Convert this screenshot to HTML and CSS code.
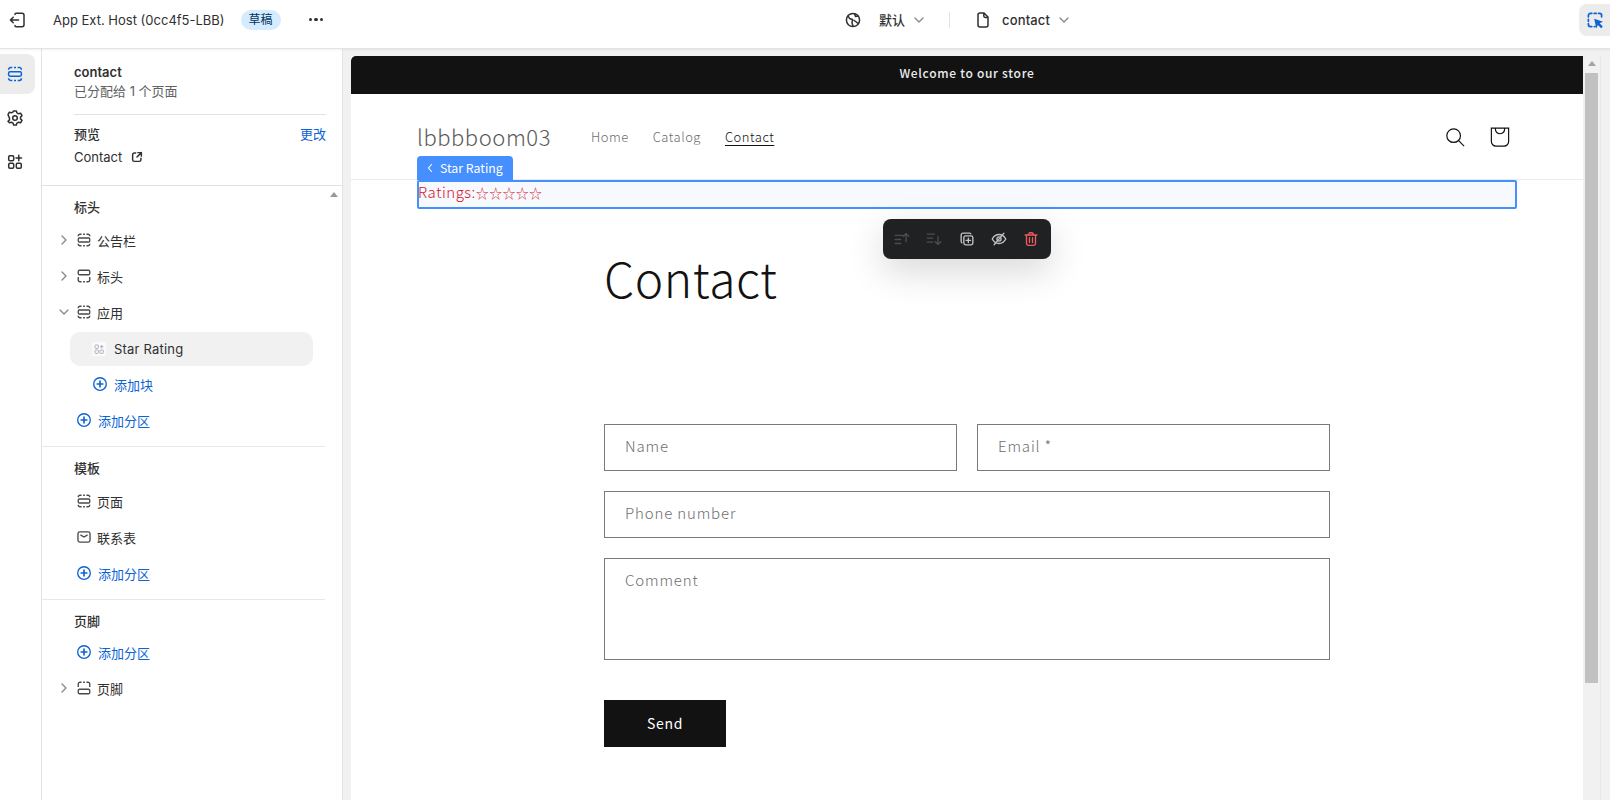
FILE: index.html
```html
<!DOCTYPE html>
<html lang="zh-CN">
<head>
<meta charset="utf-8">
<title>App Ext. Host</title>
<link rel="stylesheet" href="styles.css">
</head>
<body>
<svg class="defs" width="0" height="0" aria-hidden="true">
  <symbol id="sec" viewBox="0 0 20 20"><g fill="none" stroke="currentColor" stroke-width="1.5"><path d="M3.600 5.800v-.3a1.900 1.900 0 0 1 1.900-1.900h1.800M9 3.600h2M12.700 3.600h1.800a1.900 1.900 0 0 1 1.900 1.900v.3"/><rect x="3.600" y="7.800" width="12.800" height="4.400" rx="1.400"/><path d="M3.600 14.200v.3a1.900 1.900 0 0 0 1.900 1.900h1.800M9 16.400h2M12.700 16.400h1.800a1.900 1.900 0 0 0 1.900-1.900v-.3"/></g></symbol>
  <symbol id="hdr" viewBox="0 0 20 20"><g fill="none" stroke="currentColor" stroke-width="1.500"><rect x="3.600" y="3.600" width="12.800" height="5" rx="1.500"/><path d="M3.600 11v3.500a1.900 1.900 0 0 0 1.900 1.900h1.800M9 16.400h2M12.700 16.400h1.800a1.900 1.900 0 0 0 1.900-1.900V11"/></g></symbol>
  <symbol id="ftr" viewBox="0 0 20 20"><g fill="none" stroke="currentColor" stroke-width="1.500"><rect x="3.600" y="11.400" width="12.800" height="5" rx="1.500"/><path d="M3.600 9V5.500a1.900 1.900 0 0 1 1.900-1.900h1.800M9 3.600h2M12.700 3.600h1.800a1.900 1.900 0 0 1 1.900 1.900V9"/></g></symbol>
  <symbol id="mail" viewBox="0 0 20 20"><rect x="3.300" y="4.300" width="13.400" height="11.400" rx="2" fill="none" stroke="currentColor" stroke-width="1.500"/><path d="M6.500 8l3.500 2 3.500-2" fill="none" stroke="currentColor" stroke-width="1.500" stroke-linecap="round"/></symbol>
  <symbol id="plus" viewBox="0 0 20 20"><circle cx="10" cy="10" r="7" fill="none" stroke="currentColor" stroke-width="1.500"/><path d="M10 6.800v6.400M6.800 10h6.400" fill="none" stroke="currentColor" stroke-width="1.800" stroke-linecap="round"/></symbol>
  <symbol id="right" viewBox="0 0 14 14"><path d="M5 3l4 4-4 4" fill="none" stroke="currentColor" stroke-width="1.400" stroke-linecap="round" stroke-linejoin="round"/></symbol>
  <symbol id="down" viewBox="0 0 14 14"><path d="M3 5l4 4 4-4" fill="none" stroke="currentColor" stroke-width="1.400" stroke-linecap="round" stroke-linejoin="round"/></symbol>
</svg>

<header class="topbar">
  <svg class="ico-20 exit" viewBox="0 0 20 20"><path d="M8 4.500V4.200a1 1 0 0 1 1-1h6a2 2 0 0 1 2 2v9.600a2 2 0 0 1-2 2H9a1 1 0 0 1-1-1v-.3M11.500 10H3.500M6.200 7.200L3.400 10l2.800 2.800" fill="none" stroke="#303030" stroke-width="1.500" stroke-linecap="round" stroke-linejoin="round"/></svg>
  <span class="store">App Ext. Host (0cc4f5-LBB)</span>
  <span class="badge">草稿</span>
  <span class="dots"><i></i><i></i><i></i></span>
  <svg class="ico-20 globe" viewBox="0 0 20 20"><circle cx="10" cy="10" r="6.600" fill="none" stroke="#303030" stroke-width="1.500"/><path d="M5 5.500l1.500 3 3 1-.5 3 1 4M15.500 6l-3 .5-1-3M10.500 10l3.500 2.500.8 1" fill="none" stroke="#303030" stroke-width="1.500" stroke-linejoin="round"/></svg>
  <span class="theme">默认</span>
  <svg class="chev c1"><use href="#down"/></svg>
  <span class="vline"></span>
  <svg class="ico-20 file" viewBox="0 0 20 20"><path d="M5 5a2 2 0 0 1 2-2h4l4 4v8a2 2 0 0 1-2 2H7a2 2 0 0 1-2-2zM10.800 3.200V6a1.400 1.400 0 0 0 1.400 1.400h2.600" fill="none" stroke="#303030" stroke-width="1.500" stroke-linejoin="round"/></svg>
  <span class="tpl">contact</span>
  <svg class="chev c2"><use href="#down"/></svg>
  <button class="inspect" aria-label="inspect">
    <svg class="ico-20" viewBox="0 0 20 20"><path d="M6.800 3.400H5.400a2 2 0 0 0-2 2v1.400M3.400 9.400v1.800M3.400 13.600v1a2 2 0 0 0 2 2h1.400M9.200 3.400h2M13.500 3.400h1.100a2 2 0 0 1 2 2v1.400M9.300 16.600h.8" fill="none" stroke="#0b63d6" stroke-width="1.700" stroke-linecap="round"/><path d="M9.200 8.800l8.800 3-3.400 1.500 3.200 3.200-1.700 1.700-3.200-3.200-1.600 3.400z" fill="#0b63d6"/></svg>
  </button>
</header>

<div class="main">
  <nav class="rail">
    <a class="rail-btn active"><svg class="ico-20 blue"><use href="#sec"/></svg></a>
    <a class="rail-btn"><svg class="ico-20" viewBox="0 0 20 20"><circle cx="10" cy="10" r="2.300" fill="none" stroke="#303030" stroke-width="1.500"/><path d="M8.600 3.400h2.800l.5 2 1.700.9 2-.6 1.400 2.500-1.500 1.400v1.800l1.500 1.400-1.400 2.500-2-.6-1.700.9-.5 2H8.600l-.5-2-1.700-.9-2 .6L3 13.800l1.500-1.400v-1.800L3 7.200l1.400-2.500 2 .6 1.700-.9z" transform="translate(0 -.5)" fill="none" stroke="#303030" stroke-width="1.500" stroke-linejoin="round"/></svg></a>
    <a class="rail-btn"><svg class="ico-20" viewBox="0 0 20 20"><rect x="3.700" y="3.700" width="5" height="5" rx="1.200" fill="none" stroke="#303030" stroke-width="1.500"/><rect x="3.700" y="11.300" width="5" height="5" rx="1.200" fill="none" stroke="#303030" stroke-width="1.500"/><rect x="11.300" y="11.300" width="5" height="5" rx="1.200" fill="none" stroke="#303030" stroke-width="1.500"/><path d="M13.800 3.200v5.500M11 6h5.500" fill="none" stroke="#303030" stroke-width="1.500" stroke-linecap="round"/></svg></a>
  </nav>

  <aside class="side">
    <section class="meta">
      <div class="meta-top">
        <div class="name">contact</div>
        <div class="sub">已分配给 1 个页面</div>
      </div>
      <div class="meta-prev">
        <div class="prev-line"><span class="strong">预览</span><a class="link">更改</a></div>
        <div class="prev-page">Contact
          <svg class="ext" viewBox="0 0 16 16"><path d="M6.500 3.500H5a2 2 0 0 0-2 2V11a2 2 0 0 0 2 2h5.500a2 2 0 0 0 2-2V9.500M9 3h4v4M13 3L8 8" fill="none" stroke="#303030" stroke-width="1.700" stroke-linecap="round" stroke-linejoin="round"/></svg>
        </div>
      </div>
    </section>

    <div class="tree">
      <span class="tree-arrow"></span>
      <section class="group">
        <h3 class="gtitle">标头</h3>
        <div class="row"><svg class="chev"><use href="#right"/></svg><svg class="ico-16"><use href="#sec"/></svg>公告栏</div>
        <div class="row"><svg class="chev"><use href="#right"/></svg><svg class="ico-16"><use href="#hdr"/></svg>标头</div>
        <div class="row"><svg class="chev"><use href="#down"/></svg><svg class="ico-16"><use href="#sec"/></svg>应用</div>
        <div class="block-row"><span class="blockicon"><svg viewBox="0 0 14 14"><rect x="3" y="3" width="3.400" height="3.400" rx=".8" fill="none" stroke="#aab1bb"/><rect x="3" y="8" width="3.400" height="3.400" rx=".8" fill="none" stroke="#aab1bb"/><rect x="8" y="8" width="3.400" height="3.400" rx=".8" fill="none" stroke="#aab1bb"/><path d="M9.700 3v3.400M8 4.700h3.400" stroke="#aab1bb"/></svg></span>Star Rating</div>
        <div class="row add nested"><svg class="ico-16"><use href="#plus"/></svg>添加块</div>
        <div class="row add"><svg class="ico-16"><use href="#plus"/></svg>添加分区</div>
      </section>
      <section class="group">
        <h3 class="gtitle">模板</h3>
        <div class="row"><svg class="ico-16"><use href="#sec"/></svg>页面</div>
        <div class="row"><svg class="ico-16"><use href="#mail"/></svg>联系表</div>
        <div class="row add"><svg class="ico-16"><use href="#plus"/></svg>添加分区</div>
      </section>
      <section class="group last">
        <h3 class="gtitle">页脚</h3>
        <div class="row add"><svg class="ico-16"><use href="#plus"/></svg>添加分区</div>
        <div class="row"><svg class="chev"><use href="#right"/></svg><svg class="ico-16"><use href="#ftr"/></svg>页脚</div>
      </section>
    </div>
  </aside>

  <div class="stage">
    <div class="frame">
      <div class="announce">Welcome to our store</div>
      <div class="site-head">
        <span class="logo">lbbbboom03</span>
        <nav class="site-nav"><a>Home</a><a>Catalog</a><a class="cur">Contact</a></nav>
        <div class="head-icons">
          <svg class="h-ico" viewBox="0 0 22 22"><circle cx="9.500" cy="9.500" r="7.500" fill="none" stroke="#121212" stroke-width="1.300"/><path d="M15 15l6 6" stroke="#121212" stroke-width="1.300"/></svg>
          <svg class="h-ico" viewBox="0 0 22 22"><path d="M1.500 1.200h19v14.800a5 5 0 0 1-5 5h-9a5 5 0 0 1-5-5zM5.800 1.200c0 4 2.200 6.200 5.200 6.200s5.200-2.200 5.200-6.200" fill="none" stroke="#121212" stroke-width="1.300"/></svg>
        </div>
      </div>
      <div class="app-block">
        <div class="tab"><svg class="tab-chev" viewBox="0 0 8 10"><path d="M5.500 1.500L2.500 5l3 3.500" fill="none" stroke="#fff" stroke-width="1.100" stroke-linecap="round"/></svg>Star Rating</div>
        Ratings:<span class="stars">☆☆☆☆☆</span>
        <div class="toolbar">
          <svg viewBox="0 0 20 20" class="off"><path d="M2.500 6h8M2.500 10.500h6M2.500 15h6M14.500 13V4.500M11.500 7l3-3 3 3" fill="none" stroke="currentColor" stroke-width="1.500" stroke-linecap="round" stroke-linejoin="round"/></svg>
          <svg viewBox="0 0 20 20" class="off"><path d="M2.500 4.500h8M2.500 9h6M2.500 13.500h6M14.500 7.500V16M11.500 13l3 3 3-3" fill="none" stroke="currentColor" stroke-width="1.500" stroke-linecap="round" stroke-linejoin="round"/></svg>
          <svg viewBox="0 0 20 20" class="on"><path d="M14.500 4.800A2 2 0 0 0 12.800 3.500H5.500a2 2 0 0 0-2 2v7.300a2 2 0 0 0 1.300 1.700" fill="none" stroke="currentColor" stroke-width="1.500"/><rect x="6.500" y="6.500" width="10" height="10" rx="2" fill="none" stroke="currentColor" stroke-width="1.500"/><path d="M11.500 9v5M9 11.500h5" stroke="currentColor" stroke-width="1.500" stroke-linecap="round"/></svg>
          <svg viewBox="0 0 20 20" class="on"><path d="M2.500 10c1.800-3.400 4.300-5 7.500-5s5.700 1.600 7.500 5c-1.800 3.400-4.300 5-7.500 5s-5.700-1.600-7.500-5z" fill="none" stroke="currentColor" stroke-width="1.500"/><circle cx="10" cy="10" r="2.300" fill="none" stroke="currentColor" stroke-width="1.500"/><path d="M15.500 3.500l-11 13" stroke="currentColor" stroke-width="1.500" stroke-linecap="round"/></svg>
          <svg viewBox="0 0 20 20" class="del"><path d="M3.500 5.500h13M7.500 5.500V4.800A1.800 1.800 0 0 1 9.300 3h1.400a1.800 1.800 0 0 1 1.800 1.800v.7M5 5.500v9.500a2 2 0 0 0 2 2h6a2 2 0 0 0 2-2V5.500M8.300 8.500v5.500M11.700 8.500v5.500" fill="none" stroke="currentColor" stroke-width="1.500" stroke-linecap="round"/></svg>
        </div>
      </div>
      <main class="contact">
        <h1 class="title">Contact</h1>
        <form class="form">
          <div class="two">
            <div class="field">Name</div>
            <div class="field">Email *</div>
          </div>
          <div class="field">Phone number</div>
          <div class="field area">Comment</div>
          <div class="send">Send</div>
        </form>
      </main>
    </div>
    <div class="vscroll"><span class="up"></span><span class="thumb"></span></div>
    <div class="gutter"></div>
  </div>
</div>
</body>
</html>
```
FILE: styles.css
```css
* { box-sizing: border-box; }
html, body { margin: 0; height: 800px; overflow: hidden; background: #fff; }
body { font-family: Inter, "Noto Sans CJK SC", sans-serif; font-size: 13px; color: #303030; }
.defs { position: absolute; }
svg { display: block; flex: none; }
.ico-20 { width: 20px; height: 20px; color: #303030; }
.ico-16 { width: 18px; height: 18px; color: #4a4a4a; }
.chev { width: 14px; height: 14px; color: #8a8a8a; }

.topbar { height: 49px; display: flex; align-items: center; padding: 0 0 9px 7px; border-bottom: 1px solid #e3e3e3; box-shadow: 0 1px 2px rgba(0,0,0,.06); position: relative; z-index: 2; background: #fff; }
.store { margin-left: 26px; color: #303030; }
.badge { margin-left: 16px; width: 40px; height: 20px; border-radius: 10px; background: #d5ebff; text-align: center; line-height: 20px; font-size: 12px; color: #00335b; }
.dots { margin-left: 28px; display: flex; gap: 2px; }
.dots i { width: 3.500px; height: 3.500px; border-radius: 50%; background: #303030; }
.globe { margin-left: 520px; }
.theme { margin-left: 16px; font-weight: 500; }
.c1 { margin-left: 7px; }
.vline { width: 1px; height: 16px; background: #e3e3e3; margin-left: 23px; }
.file { margin-left: 23px; }
.tpl { margin-left: 9px; font-weight: 500; letter-spacing: .01em; }
.c2 { margin-left: 7px; }
.inspect { margin-left: auto; width: 31px; height: 32px; border: 0; padding: 0 0 0 6px; background: #ececec; border-radius: 8px 0 0 8px; }

.main { display: flex; height: 751px; }
.rail { width: 42px; flex: none; border-right: 1px solid #e3e3e3; padding-top: 5px; display: flex; flex-direction: column; gap: 4px; }
.rail-btn { width: 35px; height: 40px; border-radius: 0 8px 8px 0; display: flex; align-items: center; justify-content: center; padding-right: 5px; }
.rail-btn.active { background: #ececec; }
.blue { color: #0b63d6; }

.side { width: 301px; flex: none; border-right: 1px solid #e3e3e3; background: #fff; }
.meta { padding: 14px 16px 0 32px; border-bottom: 1px solid #e3e3e3; height: 137px; }
.meta-top { height: 52px; border-bottom: 1px solid #e3e3e3; }
.name { font-weight: 600; line-height: 18px; }
.sub { color: #616161; line-height: 20px; }
.meta-prev { padding-top: 9px; }
.prev-line { display: flex; justify-content: space-between; line-height: 20px; }
.strong { font-weight: 500; }
.link { color: #0b63d6; }
.prev-page { display: flex; align-items: center; gap: 8px; line-height: 20px; margin-top: 3px; }
.ext { width: 14px; height: 14px; }

.tree { position: relative; }
.tree-arrow { position: absolute; right: 4px; top: 6px; border: 4px solid transparent; border-top: 0; border-bottom: 5px solid #9a9a9a; }
.group { border-bottom: 1px solid #e8e8e8; margin-right: 17px; padding-bottom: 7px; }
.group.last { border: 0; }
.gtitle { margin: 0; padding: 11px 0 0 32px; font-size: 13px; font-weight: 500; line-height: 20px; height: 37px; }
.last .gtitle { height: 35px; }
.row { height: 36px; display: flex; align-items: center; padding: 0 0 2px 33px; gap: 4px; color: #303030; position: relative; }
.row .chev { position: absolute; left: 15px; }
.row.add { color: #0b63d6; gap: 5px; }
.row.add .ico-16 { color: #0b63d6; }
.row.nested { padding-left: 49px; }
.block-row { height: 34px; margin: 1px 12px 1px 28px; border-radius: 10px; background: #f1f1f1; display: flex; align-items: center; padding-left: 22px; gap: 8px; letter-spacing: .2px; }
.blockicon { width: 14px; height: 14px; background: #fafafa; display: block; }

.stage { flex: 1; display: flex; background: #f1f1f1; padding-top: 7px; padding-left: 8px; min-width: 0; }
.frame { width: 1232px; flex: none; background: #fff; position: relative; }
.frame, .announce, .site-head, .app-block, .contact { font-family: "Noto Sans CJK JP", "Noto Sans CJK SC", sans-serif; }
.announce { height: 38px; background: #121212; border-radius: 5px 0 0 0; color: #ececec; text-align: center; font-size: 12px; font-weight: 500; letter-spacing: .7px; line-height: 34px; }
.site-head { height: 86px; border-bottom: 1px solid #ebebeb; display: flex; align-items: center; padding: 0 73px 0 66px; }
.logo { font-size: 22px; font-weight: 300; color: #5a5a5a; letter-spacing: .55px; width: 174px; margin-bottom: 2px; }
.site-nav { display: flex; gap: 24px; font-size: 13px; letter-spacing: .5px; color: #6d6d6d; font-weight: 300; }
.site-nav .cur { color: #121212; text-decoration: underline; text-underline-offset: 3px; }
.head-icons { margin-left: auto; display: flex; gap: 25px; }
.h-ico { width: 20px; height: 20px; }

.app-block { height: 29px; margin: 0 66px; border: 2px solid #458fff; border-radius: 2px; background: #f6f9fe; color: #d9101f; font-size: 15px; font-weight: 300; line-height: 20px; text-indent: -1px; position: relative; letter-spacing: .5px; white-space: nowrap; }
.stars { font-size: 13px; letter-spacing: .3px; }
.tab { position: absolute; left: -2px; top: -26px; height: 24px; width: 96px; border-radius: 4px 4px 0 0; background: #458fff; color: #fff; font-size: 12.300px; font-weight: 400; letter-spacing: 0; line-height: 25px; padding-left: 23px; text-indent: 0; }
.tab-chev { position: absolute; left: 9px; top: 7px; width: 8px; height: 10px; }
.toolbar { position: absolute; left: 464px; top: 37px; width: 168px; height: 40px; border-radius: 8px; background: #202123; box-shadow: 0 12px 36px rgba(0,0,0,.16); display: flex; align-items: center; justify-content: space-between; padding: 0 11px 0 10px; z-index: 1; }
.toolbar svg { width: 18px; height: 18px; }
.off { color: #4c4d4f; }
.on { color: #c4c4c4; }
.del { color: #ef5a5f; }

.contact { width: 726px; margin: 0 auto; padding-top: 34px; }
.title { margin: 0; font-size: 48px; font-weight: 300; letter-spacing: .6px; color: #121212; line-height: 68px; height: 181px; }
.form { display: flex; flex-direction: column; gap: 20px; }
.two { display: flex; gap: 20px; }
.two .field { flex: 1; }
.field { height: 47px; border: 1px solid #7a7a7a; padding: 10px 20px; font-size: 15px; font-weight: 300; line-height: 22px; letter-spacing: .85px; color: #6e6e6e; }
.area { height: 102px; }
.send { width: 122px; height: 47px; margin-top: 20px; background: #121212; color: #fff; text-align: center; line-height: 46px; font-size: 14px; letter-spacing: .7px; font-weight: 400; }

.vscroll { width: 17px; flex: none; background: #f1f1f1; position: relative; padding: 17px 2px 0; }
.up { position: absolute; left: 5px; top: 5px; border: 4px solid transparent; border-top: 0; border-bottom: 5px solid #a3a3a3; }
.thumb { display: block; height: 610px; background: #c1c1c1; }
.gutter { flex: 1; border-left: 1px solid #e8e8e8; }
```
